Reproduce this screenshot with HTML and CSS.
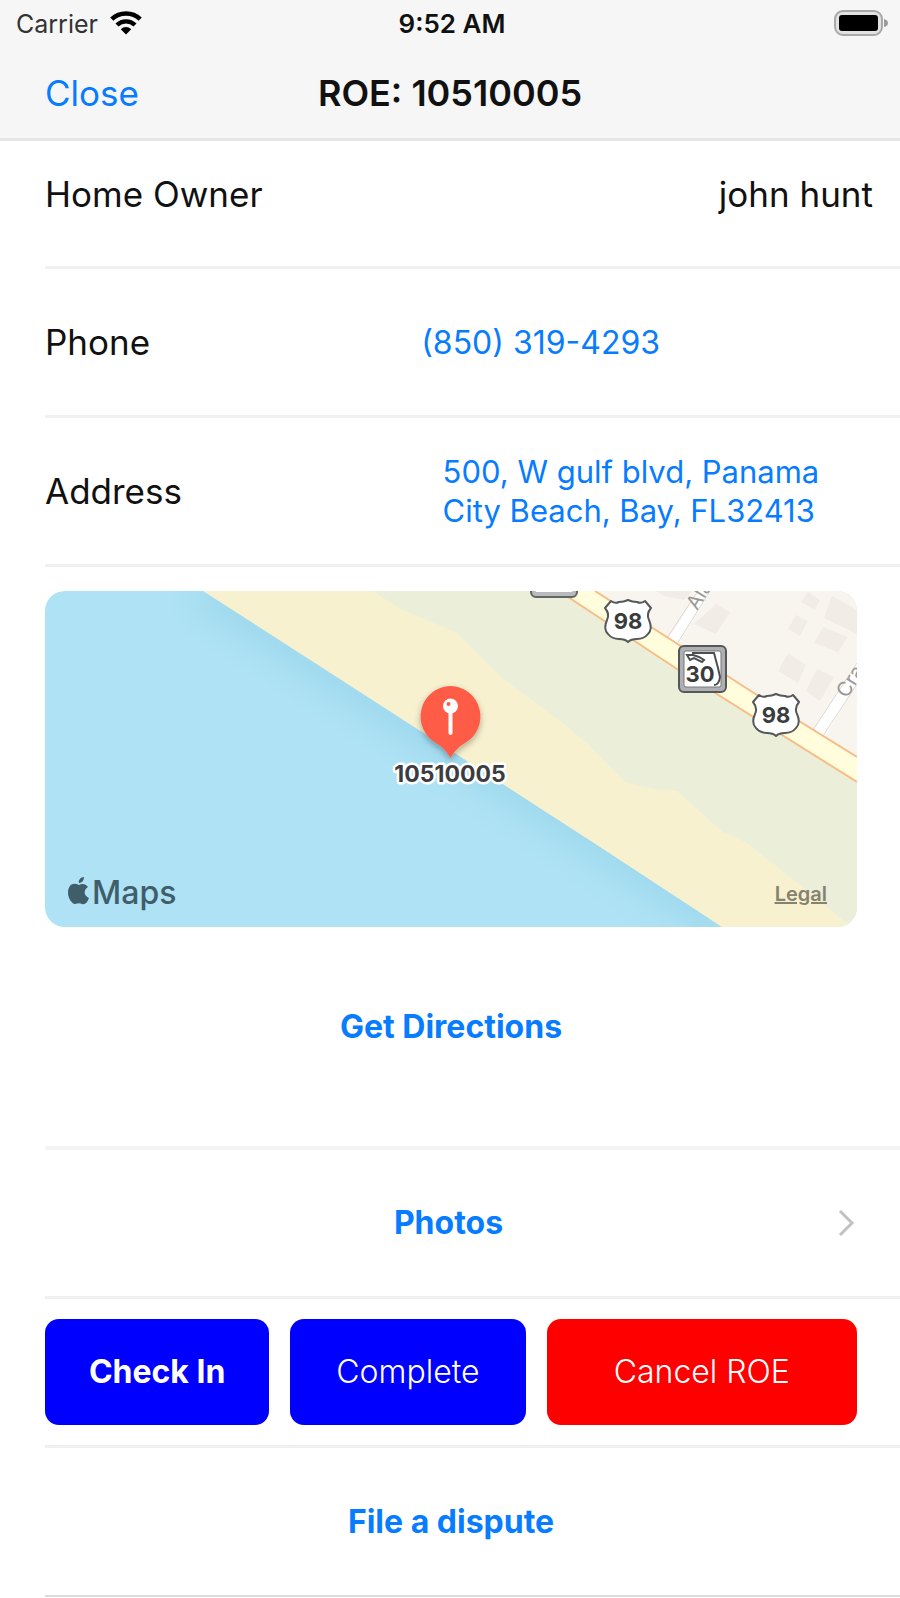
FILE: index.html
```html
<!DOCTYPE html>
<html lang="en">
<head>
<meta charset="utf-8">
<meta name="viewport" content="width=device-width, initial-scale=1">
<title>ROE: 10510005</title>
<link rel="stylesheet" href="styles.css">
</head>
<body>
<header class="top">
  <div class="status">
    <div class="carrier">Carrier
      <svg class="wifi" viewBox="0 0 32 25" aria-hidden="true">
        <path d="M1.800 9.200A20.500 20.500 0 0 1 30.200 9.200" fill="none" stroke="#000" stroke-width="4.600"/>
        <path d="M7 15A13 13 0 0 1 25 15" fill="none" stroke="#000" stroke-width="4.400"/>
        <path d="M10.800 19.200a7.500 7.500 0 0 1 10.400 0L16 24.500z"/>
      </svg>
    </div>
    <time>9:52 AM</time>
    <svg class="battery" viewBox="0 0 54 26" aria-hidden="true">
      <rect x="1" y="1" width="47" height="24" rx="8" fill="#e2e2e2" stroke="#a9a9a9" stroke-width="2"/>
      <rect x="5" y="5" width="39" height="16" rx="3"/>
      <path d="M50 9q4 1 4 4t-4 4z" fill="#9b9b9b"/>
    </svg>
  </div>
  <nav class="nav">
    <button class="close" type="button">Close</button>
    <h1>ROE: 10510005</h1>
  </nav>
</header>
<main class="list">
  <section class="row owner"><span>Home Owner</span><span>john hunt</span></section>
  <section class="row phone"><span>Phone</span><a class="value" href="tel:8503194293">(850) 319-4293</a></section>
  <section class="row address"><span>Address</span><a class="value" href="#map">500, W gulf blvd, Panama<br>City Beach, Bay, FL32413</a></section>
  <section class="place">
    <div class="map" id="map">
      <svg class="canvas" viewBox="0 0 812 336" preserveAspectRatio="xMidYMid slice" role="img" aria-label="Map of 10510005">
        <defs>
          <filter id="soft" x="-20%" y="-20%" width="140%" height="140%"><feGaussianBlur stdDeviation="14"/></filter>
          <filter id="drop" x="-40%" y="-40%" width="180%" height="180%"><feDropShadow dx="0" dy="3" stdDeviation="3" flood-opacity=".3"/></filter>
          <g id="us98">
            <path d="M-17-21q4 3 8 1q5 0 9-2q4 2 9 2q4 2 8-1l6 7q-5 6-2 12q4 9-1 14q-4 5-11 5q-6 0-9 3q-3-3-9-3q-7 0-11-5q-5-5-1-14q3-6-2-12z" fill="#fff" stroke="#55585a" stroke-width="2" stroke-linejoin="round"/>
            <text class="shield" y="7">98</text>
          </g>
        </defs>
        <rect width="812" height="336" fill="#aee2f4"/>
        <path d="M158 0L377 141L555 256L677 336" fill="none" stroke="#8acce5" stroke-width="26" opacity=".5" filter="url(#soft)"/>
        <path d="M158 0L377 141L555 256L677 336H812V0z" fill="#f7f1cf"/>
        <path d="M328 0L352 16L412 42L455 85L518 132L542 152L578 189Q590 197 632 200L678 241L702 252L755 294L798 329L812 336V0z" fill="#ebeed9"/>
        <path d="M532 0L812 178V0z" fill="#f8f5ef"/>
        <g fill="#f1ece6">
          <path d="M611 0h36l-8 9-20-4z"/><path d="M671 13l14 8-14 22-22-10z"/><path d="M763 1l12 8-5 10-14-8z"/><path d="M787 5l25 14v24l-33-16z"/><path d="M751 24l12 6-8 15-12-7z"/><path d="M778 36l25 10-10 15-24-9z"/><path d="M743 62l18 12-8 18-20-12z"/><path d="M772 78l17 8-14 24-14-10z"/>
        </g>
        <path d="M622 49L654 0H666L632 55z" fill="#fff"/>
        <path d="M622 47L653 0M632 53L665 0" stroke="#d9d7d4" fill="none"/>
        <path d="M766 142L812 70V92L778 149z" fill="#fff"/>
        <path d="M768 139L812 72M778 145L812 93" stroke="#d9d7d4" fill="none"/>
        <path d="M514 0L632 78L812 191V166L712 104L550 0z" fill="#fffddc"/>
        <path d="M514 0L632 78L812 191M550 0L712 104L812 166" fill="none" stroke="#f8bd87" stroke-width="2"/>
        <text class="street" transform="translate(652 20) rotate(-58)">Ala</text>
        <text class="street" transform="translate(802 108) rotate(-58)">Cra</text>
        <rect x="486" y="-39" width="46" height="45" rx="5" fill="#b9babb" stroke="#626466" stroke-width="2"/>
        <rect x="490" y="-39" width="38" height="40" rx="2" fill="#fff"/>
        <use href="#us98" x="583" y="31"/>
        <use href="#us98" x="731" y="125"/>
        <rect x="634" y="55" width="47" height="46" rx="5" fill="#aeb0b1" stroke="#55585a" stroke-width="2"/>
        <rect x="639" y="60" width="37" height="36" rx="2" fill="#fff" stroke="#77797b"/>
        <path d="M642 64l3 5 4-2 8 4 2-2-5-3-6-2zM647 62h22l4 15 2 9q-1 8-6 8" fill="none" stroke="#4c4e50" stroke-width="2"/>
        <text class="shield" x="655" y="91">30</text>
        <path d="M405.500 95A30.500 30.500 0 0 1 420 152Q411 157 405.500 167Q400 157 391 152A30.500 30.500 0 0 1 405.500 95z" fill="#ff5b47" filter="url(#drop)"/>
        <circle cx="405.500" cy="115" r="7.500" fill="#fff"/>
        <circle cx="403.500" cy="113" r="2" fill="#ff5b47"/>
        <path d="M405.500 121V142" stroke="#fff" stroke-width="4" stroke-linecap="round"/>
        <text class="pin-name" x="405" y="191">10510005</text>
        <g fill="#405d6a">
          <path d="M34 294c3-2 7-1 9 2-5 3-4 9 1 11-2 5-4 7-7 6-2-1-4-1-7 0-3 0-7-6-7-11 0-8 5-11 11-8zM34 292c-1-3 2-6 5-6 0 3-2 6-5 6z"/>
          <text class="brand" x="47" y="313">Maps</text>
        </g>
      </svg>
      <a class="legal" href="#legal">Legal</a>
    </div>
    <button class="action directions" type="button">Get Directions</button>
  </section>
  <section class="row photos">
    <button class="action" type="button">Photos</button>
    <svg class="chevron" viewBox="0 0 17 28" aria-hidden="true"><path d="M2 2l12 12L2 26" fill="none" stroke="#c2c2c4" stroke-width="3"/></svg>
  </section>
  <section class="row buttons">
    <button class="fill strong" type="button">Check In</button>
    <button class="fill" type="button">Complete</button>
    <button class="fill danger" type="button">Cancel ROE</button>
  </section>
  <section class="row dispute"><button class="action" type="button">File a dispute</button></section>
</main>
</body>
</html>
```
FILE: styles.css
```css
* { box-sizing: border-box; }
body {
  margin: 0;
  background: #fff;
  color: #111;
  font-family: Inter, "Liberation Sans", sans-serif;
  font-size: 35px;
  line-height: 40px;
}
button {
  border: 0;
  padding: 0;
  background: none;
  font: inherit;
  color: #087cff;
  cursor: pointer;
}
a { color: #087cff; text-decoration: none; }
svg { display: block; }

.top {
  height: 141px;
  background: #f6f6f6;
  border-bottom: 3px solid #e6e6e6;
}
.status {
  display: grid;
  grid-template-columns: 1fr auto 1fr;
  align-items: center;
  height: 48px;
  padding: 0 12px 0 16px;
  font-size: 25px;
  line-height: 32px;
}
.carrier { display: flex; align-items: center; gap: 12px; color: #333; }
.wifi { width: 32px; height: 25px; margin-bottom: 3px; }
.status time { font-size: 26px; font-weight: 600; }
.battery { width: 54px; height: 26px; margin-bottom: 2px; justify-self: end; }
.nav {
  display: grid;
  grid-template-columns: 1fr auto 1fr;
  align-items: center;
  height: 90px;
  padding: 0 45px;
}
.close { justify-self: start; }
.nav h1 { margin: 0; font-size: 36px; font-weight: 600; }

.list { padding-left: 45px; }
.row {
  display: flex;
  align-items: center;
  height: 149px;
  border-bottom: 3px solid #f0f0f0;
}
.owner {
  height: 128px;
  justify-content: space-between;
  padding: 0 27px 20px 0;
}
.phone, .address { display: grid; }
.phone { grid-template-columns: 375px 1fr; grid-template-columns: 44% 1fr; }
.address { grid-template-columns: 46.5% 1fr; }
.value { font-size: 32px; line-height: 39px; }
.address .value { font-size: 31px; }

.place {
  padding: 24px 43px 99px 0;
  border-bottom: 4px solid #f4f4f4;
}
.map {
  position: relative;
  height: 336px;
  overflow: hidden;
  border-radius: 20px;
}
.canvas { width: 100%; height: 100%; }
.shield { font: 700 22px Inter, sans-serif; fill: #3a3b3d; text-anchor: middle; }
.street { font: 20px Inter, sans-serif; fill: #9b9894; }
.pin-name {
  font: 700 23px Inter, sans-serif;
  fill: #3c3c3e;
  stroke: #fff;
  stroke-width: 5px;
  stroke-linejoin: round;
  paint-order: stroke;
  text-anchor: middle;
}
.brand { font: 500 32px Inter, sans-serif; }
.legal {
  position: absolute;
  right: 30px;
  bottom: 21px;
  color: #85826f;
  font-size: 20px;
  font-weight: 600;
  line-height: 24px;
  text-decoration: underline;
}
.action { font-size: 32px; font-weight: 700; }
.directions { display: block; margin: 80px auto 0; }
.photos { padding-right: 45px; }
.photos .action { flex: 1; padding-left: 14px; }
.chevron { width: 17px; height: 28px; }
.buttons {
  display: grid;
  grid-template-columns: 224fr 235fr 310fr;
  gap: 21px;
  padding-right: 43px;
}
.fill {
  height: 106px;
  border-radius: 14px;
  background: #00f;
  color: #fff;
  font-size: 32px;
  font-weight: 300;
}
.strong { font-weight: 700; }
.danger { background: #f00; }
.dispute { justify-content: center; padding-right: 43px; border-bottom: 2px solid #dcdcdc; }
```
